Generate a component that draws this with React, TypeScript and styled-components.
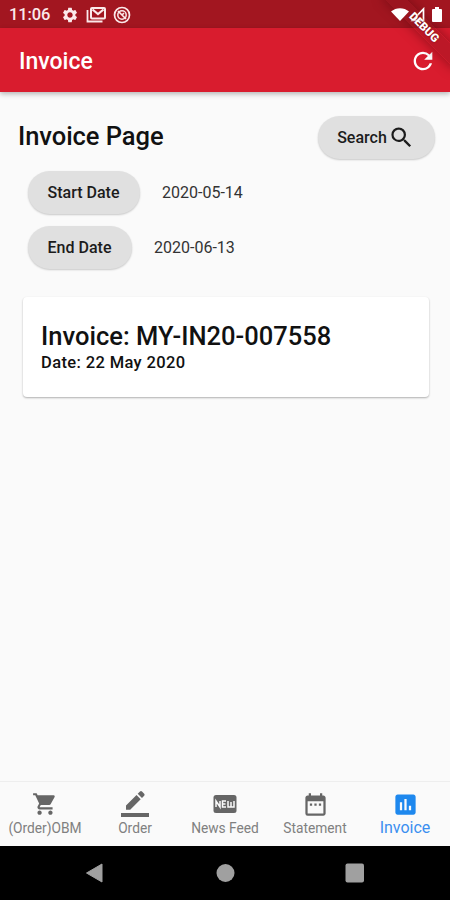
import React from "react";
import styled, { createGlobalStyle } from "styled-components";
import {
  MdSettings,
  MdRefresh,
  MdSearch,
  MdShoppingCart,
  MdDateRange,
  MdInsertChart,
} from "react-icons/md";

const GlobalStyle = createGlobalStyle`
  * { box-sizing: border-box; }
  body {
    margin: 0;
    font-family: Roboto, "Noto Sans", sans-serif;
    background: #fafafa;
  }
`;

const Screen = styled.div`
  position: relative;
  display: flex;
  flex-direction: column;
  width: 450px;
  height: 900px;
  overflow: hidden;
  background: #fafafa;
  color: #111;
`;

const StatusBar = styled.header`
  display: flex;
  align-items: center;
  height: 28px;
  flex: none;
  padding: 1px 8px 0 9px;
  background: #a21620;
  color: #fbe9ea;
`;

const Clock = styled.span`
  width: 52px;
  padding-top: 1px;
  font-size: 16.5px;
  letter-spacing: -0.1px;
  font-weight: 500;
  line-height: 20px;
`;

const StatusIcons = styled.div`
  display: flex;
  align-items: center;
  gap: 7px;
  flex: 1;
`;

const SignalIcons = styled.div`
  position: relative;
  z-index: 1;
  display: flex;
  align-items: center;
  color: #fff;
`;

const AppBar = styled.div`
  display: flex;
  align-items: center;
  justify-content: space-between;
  height: 64px;
  flex: none;
  padding: 1px 13px 0 19px;
  background: #d91c2e;
  color: #fff;
  box-shadow: 0 2px 5px rgba(0, 0, 0, 0.28);
`;

const BarTitle = styled.h1`
  margin: 0;
  padding-top: 2px;
  font-size: 23px;
  font-weight: 500;
  line-height: 28px;
`;

const DebugBanner = styled.div`
  position: absolute;
  z-index: 2;
  top: 20px;
  left: 374px;
  width: 100px;
  height: 15px;
  transform: rotate(45deg);
  color: #fff;
  font-size: 11.5px;
  font-weight: 900;
  line-height: 15px;
  text-align: center;
  text-shadow: 0 0 2px rgba(110, 10, 20, 0.8);
`;

const BannerShade = styled.div`
  position: absolute;
  top: 20px;
  left: 374px;
  width: 100px;
  height: 15px;
  transform: rotate(45deg);
  background: rgba(145, 20, 30, 0.4);
  box-shadow: 0 0 11px 1px rgba(90, 5, 12, 0.5);
`;

const Content = styled.main`
  flex: 1;
  padding: 24px 15px 0 18px;
`;

const HeadingRow = styled.div`
  display: flex;
  align-items: center;
  justify-content: space-between;
  height: 43px;
`;

const PageTitle = styled.h2`
  margin: 0;
  padding-bottom: 3px;
  font-size: 25.5px;
  font-weight: 500;
  letter-spacing: -0.05px;
  line-height: 30px;
`;

const Pill = styled.button<{ $width: number }>`
  display: flex;
  align-items: center;
  justify-content: center;
  gap: 1px;
  width: ${(p) => p.$width}px;
  height: 43px;
  padding: 0 1px 1px 0;
  border: 0;
  border-radius: 22px;
  background: #e0e0e0;
  color: #1c1c1c;
  font: 500 16px Roboto, sans-serif;
  box-shadow: 0 1px 2px rgba(0, 0, 0, 0.2);
`;

const DateRow = styled.div`
  display: flex;
  align-items: center;
  gap: 22px;
  margin: 12px 0 0 10px;
`;

const DateValue = styled.span`
  color: #333;
  font-size: 16px;
  line-height: 20px;
`;

const InvoiceCard = styled.article`
  width: 406px;
  height: 100px;
  margin: 28px 0 0 5px;
  padding: 23px 18px 0;
  border-radius: 4px;
  background: #fff;
  box-shadow: 0 1px 2px rgba(0, 0, 0, 0.3);
`;

const InvoiceNumber = styled.h3`
  margin: 0;
  font-size: 25.5px;
  font-weight: 500;
  letter-spacing: 0.02px;
  line-height: 32px;
`;

const InvoiceDate = styled.p`
  margin: 0;
  padding-top: 1px;
  font-size: 16.5px;
  font-weight: 500;
  letter-spacing: 0.37px;
  line-height: 20px;
`;

const TabBar = styled.nav`
  display: grid;
  grid-template-columns: repeat(5, 1fr);
  flex: none;
  height: 65px;
  border-top: 1px solid #eee;
  background: #fafafa;
`;

const Tab = styled.div`
  display: flex;
  flex-direction: column;
  align-items: center;
  padding-top: 8px;
`;

const TabIcon = styled.span<{ $active?: boolean }>`
  display: flex;
  align-items: center;
  justify-content: center;
  height: 28px;
  color: ${(p) => (p.$active ? "#1e88ee" : "#666")};
`;

const TabLabel = styled.span<{ $active?: boolean }>`
  font-size: ${(p) => (p.$active ? 16 : 13.75)}px;
  line-height: 20px;
  color: ${(p) => (p.$active ? "#3b8ff0" : "#808080")};
  white-space: nowrap;
`;

const SystemNav = styled.footer`
  display: flex;
  align-items: center;
  justify-content: center;
  gap: 110px;
  flex: none;
  height: 54px;
  background: #000;
`;

const MailStackIcon = () => (
  <svg width="20" height="17" viewBox="0 0 20 17" fill="none" stroke="currentColor">
    <path d="M1.500 4v11.500h15" strokeWidth="1.800" />
    <rect x="5" y="2" width="14" height="10.500" rx="1" strokeWidth="2" />
    <path d="M6.500 3.500L12 8l5.500-4.500" strokeWidth="2.200" />
  </svg>
);

const BlockedIcon = () => (
  <svg width="18" height="18" viewBox="0 0 18 18" fill="none" stroke="currentColor">
    <circle cx="9" cy="9" r="7.500" strokeWidth="1.700" />
    <circle cx="9" cy="9" r="4.200" strokeWidth="1.500" />
    <path d="M5 5l8 8M9 9l2-2" strokeWidth="1.700" />
  </svg>
);

const WifiIcon = () => (
  <svg width="18" height="13" viewBox="0 0 18 13" fill="currentColor">
    <path d="M0 3.500C5-1 13-1 18 3.500L9 13z" />
  </svg>
);

const CellIcon = () => (
  <svg width="23" height="15" viewBox="0 0 23 15">
    <path d="M14.500 2v11.500h-11z" fill="none" stroke="currentColor" strokeWidth="1.700" />
  </svg>
);

const BatteryIcon = () => (
  <svg width="10" height="15" viewBox="0 0 10 15" fill="currentColor">
    <path d="M3 0h4v2h2q1 0 1 1v11q0 1-1 1H1q-1 0-1-1V3q0-1 1-1h2z" />
  </svg>
);

const PencilLineIcon = () => (
  <svg width="28" height="28" viewBox="0 0 28 28" fill="currentColor">
    <path d="M5 15.500L15.500 5l4.200 4.200L9.200 19.700H5zM16.700 3.800L19 1.500q1-.9 2 0l2.200 2.200q.9 1 0 2L21 8z" />
    <path d="M0 23h28v4H0z" />
  </svg>
);

const NewBadgeIcon = () => (
  <svg width="24" height="20" viewBox="0 0 24 20">
    <rect x=".5" y="1" width="23" height="18" rx="2.500" fill="currentColor" />
    <path
      d="M3 13V7l4 6V7M13 7H9.500v6H13M9.500 10h3M15 7v6h6V7M18 8v5"
      fill="none"
      stroke="#fafafa"
      strokeWidth="1.500"
    />
  </svg>
);

const tabs = [
  { label: "(Order)OBM", icon: <MdShoppingCart size={26} /> },
  { label: "Order", icon: <PencilLineIcon /> },
  { label: "News Feed", icon: <NewBadgeIcon /> },
  { label: "Statement", icon: <MdDateRange size={27} /> },
  { label: "Invoice", icon: <MdInsertChart size={27} />, active: true },
];

export default function App() {
  return (
    <>
      <GlobalStyle />
      <Screen>
        <BannerShade />
        <StatusBar>
          <Clock>11:06</Clock>
          <StatusIcons>
            <MdSettings size={18} />
            <MailStackIcon />
            <BlockedIcon />
          </StatusIcons>
          <SignalIcons>
            <WifiIcon />
            <CellIcon />
            <BatteryIcon />
          </SignalIcons>
        </StatusBar>
        <AppBar>
          <BarTitle>Invoice</BarTitle>
          <MdRefresh size={28} />
        </AppBar>
        <Content>
          <HeadingRow>
            <PageTitle>Invoice Page</PageTitle>
            <Pill $width={117}>
              Search
              <MdSearch size={27} />
            </Pill>
          </HeadingRow>
          <DateRow>
            <Pill $width={112}>Start Date</Pill>
            <DateValue>2020-05-14</DateValue>
          </DateRow>
          <DateRow>
            <Pill $width={104}>End Date</Pill>
            <DateValue>2020-06-13</DateValue>
          </DateRow>
          <InvoiceCard>
            <InvoiceNumber>Invoice: MY-IN20-007558</InvoiceNumber>
            <InvoiceDate>Date: 22 May 2020</InvoiceDate>
          </InvoiceCard>
        </Content>
        <TabBar>
          {tabs.map((tab) => (
            <Tab key={tab.label}>
              <TabIcon $active={tab.active}>{tab.icon}</TabIcon>
              <TabLabel $active={tab.active}>{tab.label}</TabLabel>
            </Tab>
          ))}
        </TabBar>
        <SystemNav>
          <svg width="20" height="20" viewBox="0 0 20 20" fill="#a0a0a0">
            <path d="M1.500 10L17 1v18z" stroke="#a0a0a0" strokeLinejoin="round" />
          </svg>
          <svg width="20" height="20" viewBox="0 0 20 20" fill="#a0a0a0">
            <circle cx="10.500" cy="10" r="9" />
          </svg>
          <svg width="20" height="20" viewBox="0 0 20 20" fill="#a0a0a0">
            <rect x=".5" y=".5" width="18.500" height="19" rx="2" />
          </svg>
        </SystemNav>
        <DebugBanner>DEBUG</DebugBanner>
      </Screen>
    </>
  );
}
